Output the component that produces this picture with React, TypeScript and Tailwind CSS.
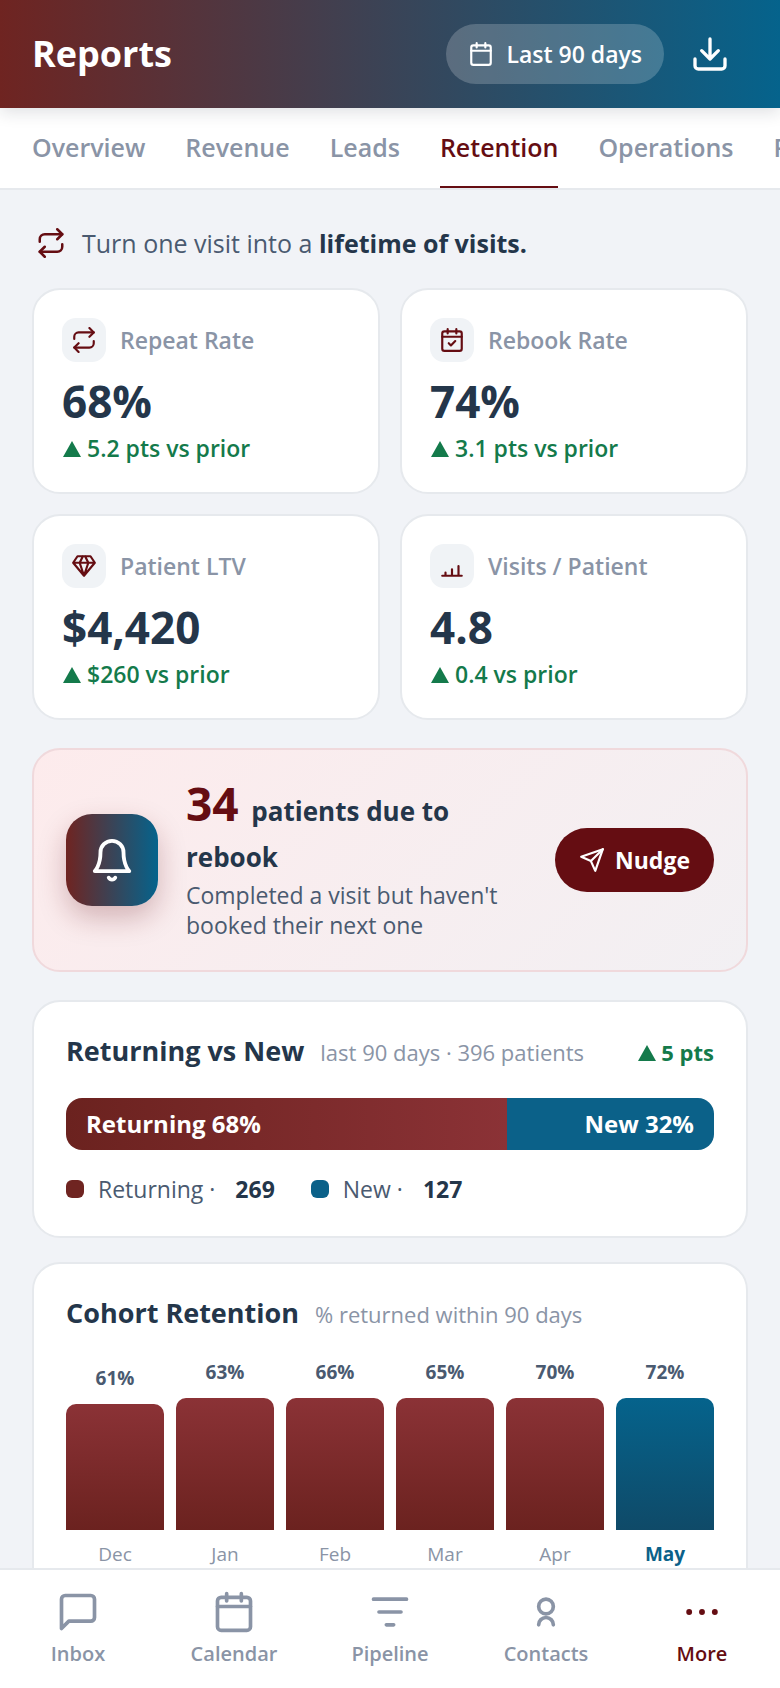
import type { ReactNode } from "react";

type IconProps = { className?: string; strokeWidth?: number; children: ReactNode };

function Icon({ className, strokeWidth = 2, children }: IconProps) {
  return (
    <svg
      viewBox="0 0 24 24"
      fill="none"
      stroke="currentColor"
      strokeWidth={strokeWidth}
      strokeLinecap="round"
      strokeLinejoin="round"
      aria-hidden="true"
      className={`shrink-0 ${className ?? ""}`}
    >
      {children}
    </svg>
  );
}

function UpArrow() {
  return (
    <svg viewBox="0 0 19 16" aria-label="up" className="inline h-4 w-[19px] align-baseline">
      <path d="M1 16 10 0l9 16z" fill="currentColor" />
    </svg>
  );
}

const repeatPath = (
  <>
    <path d="m17 1 4 4-4 4" />
    <path d="M3 11V9a4 4 0 0 1 4-4h14" />
    <path d="m7 23-4-4 4-4" />
    <path d="M21 13v2a4 4 0 0 1-4 4H3" />
  </>
);

const calendarPath = (
  <>
    <rect x="3" y="4" width="18" height="18" rx="2" />
    <path d="M8 2v4M16 2v4M3 9h18" />
  </>
);

const tabs = ["Overview", "Revenue", "Leads", "Retention", "Operations", "Providers"];

const stats = [
  { label: "Repeat Rate", value: "68%", delta: "5.2 pts vs prior", icon: repeatPath },
  {
    label: "Rebook Rate",
    value: "74%",
    delta: "3.1 pts vs prior",
    icon: (
      <>
        {calendarPath}
        <path d="m9 15 2 2 4-4" />
      </>
    ),
  },
  {
    label: "Patient LTV",
    value: "$4,420",
    delta: "$260 vs prior",
    icon: <path d="M6 3h12l4 6-10 12L2 9zM2 9h20M11 3 8 9l4 12 4-12-3-6" />,
  },
  {
    label: "Visits / Patient",
    value: "4.8",
    delta: "0.4 vs prior",
    icon: <path d="M3 21h18M6 21v-3M12 21v-6M18 21v-9" />,
  },
];

const cohorts = [
  { month: "Dec", rate: 61, height: 126 },
  { month: "Jan", rate: 63, height: 132 },
  { month: "Feb", rate: 66, height: 132 },
  { month: "Mar", rate: 65, height: 132 },
  { month: "Apr", rate: 70, height: 132 },
  { month: "May", rate: 72, height: 132, current: true },
];

const navItems = [
  {
    label: "Inbox",
    icon: <path d="M21 15a2 2 0 0 1-2 2H7l-4 4V5a2 2 0 0 1 2-2h14a2 2 0 0 1 2 2z" />,
  },
  { label: "Calendar", icon: calendarPath },
  { label: "Pipeline", icon: <path d="M3 5h18M6 12h12M10 19h4" /> },
  {
    label: "Contacts",
    icon: (
      <>
        <circle cx="12" cy="9" r="4" />
        <path d="M8 19a4 4 0 0 1 8 0" />
      </>
    ),
  },
  {
    label: "More",
    active: true,
    icon: (
      <g fill="currentColor" stroke="none">
        <circle cx="5" cy="12" r="1.6" />
        <circle cx="12" cy="12" r="1.6" />
        <circle cx="19" cy="12" r="1.6" />
      </g>
    ),
  },
];

function StatCard({ label, value, delta, icon }: (typeof stats)[number]) {
  return (
    <div className="rounded-[28px] border-2 border-[#e6e9ed] bg-white p-7">
      <div className="flex items-center gap-[14px]">
        <span className="flex size-11 items-center justify-center rounded-[14px] bg-[#f0f3f6] text-[#650d12]">
          <Icon className="size-[26px]">{icon}</Icon>
        </span>
        <span className="text-[23px] font-semibold text-[#8a94a6]">{label}</span>
      </div>
      <p className="mt-4 text-[44px] leading-[46px] font-bold text-[#24364a]">{value}</p>
      <p className="mt-2 text-[23px] leading-8 font-semibold text-[#147a4b]">
        <UpArrow /> {delta}
      </p>
    </div>
  );
}

function Panel({ title, note, extra, children }: { title: string; note: string; extra?: ReactNode; children: ReactNode }) {
  return (
    <section className="rounded-[28px] border-2 border-[#e6e9ed] bg-white px-8 py-[30px]">
      <div className="flex items-baseline gap-4">
        <h2 className="text-[27px] leading-[38px] font-bold text-[#24364a]">{title}</h2>
        <span className="text-[22px] text-[#8a94a6]">{note}</span>
        {extra}
      </div>
      {children}
    </section>
  );
}

export default function App() {
  return (
    <div className="flex h-screen flex-col overflow-hidden bg-[#f1f3f7] font-['Open_Sans',sans-serif]">
      <header className="z-10 flex shrink-0 items-center gap-2 bg-linear-to-r/srgb from-[#6f2421] to-[#05638c] px-8 py-6 text-white shadow-[0_4px_16px_rgba(20,30,50,0.14)]">
        <h1 className="flex-1 text-4xl font-bold">Reports</h1>
        <button className="flex h-[60px] items-center gap-3 rounded-full bg-white/20 px-[22px] text-[23px] font-semibold">
          <Icon className="size-[26px]">{calendarPath}</Icon>
          Last 90 days
        </button>
        <button aria-label="Download report" className="flex h-[60px] w-[76px] items-center justify-center">
          <Icon className="size-10">
            <path d="M21 15v4a2 2 0 0 1-2 2H5a2 2 0 0 1-2-2v-4" />
            <path d="m7 10 5 5 5-5M12 15V3" />
          </Icon>
        </button>
      </header>

      <nav className="flex h-[82px] shrink-0 gap-10 overflow-hidden border-b-2 border-[#e6e9ed] bg-white px-8">
        {tabs.map((tab) => (
          <a
            key={tab}
            href="#"
            className={
              tab === "Retention"
                ? "flex items-center border-b-2 border-[#650d12] pt-0.5 text-[25px] font-semibold whitespace-nowrap text-[#650d12]"
                : "flex items-center text-[25px] font-semibold whitespace-nowrap text-[#8a94a6]"
            }
          >
            {tab}
          </a>
        ))}
      </nav>

      <main className="min-h-0 flex-1 overflow-y-auto px-8 pt-9 [scrollbar-width:none]">
        <div className="flex items-center gap-4 pl-1">
          <Icon className="size-[30px] text-[#650d12]">{repeatPath}</Icon>
          <p className="text-[25px] leading-[34px] text-[#4a5a70]">
            Turn one visit into a <strong className="font-bold text-[#24364a]">lifetime of visits.</strong>
          </p>
        </div>

        <div className="mt-7 grid grid-cols-2 gap-5">
          {stats.map((stat) => (
            <StatCard key={stat.label} {...stat} />
          ))}
        </div>

        <section className="mt-7 flex items-center gap-7 rounded-[28px] border-2 border-[#f0d9dc] bg-linear-135/srgb from-[#fdebec] to-[#f2f0f3] px-8 py-[30px]">
          <span className="flex size-[92px] shrink-0 items-center justify-center rounded-[26px] bg-linear-to-r/srgb from-[#6f2421] to-[#05638c] text-white shadow-[0_12px_28px_rgba(101,13,18,0.25)]">
            <Icon className="size-[46px]">
              <path d="M6 8a6 6 0 0 1 12 0c0 7 3 9.8 3 9.8H3S6 15 6 8z" />
              <path d="M10.3 21.2a1.94 1.94 0 0 0 3.4 0" />
            </Icon>
          </span>
          <div className="flex-1">
            <p className="text-[26px] leading-[46px] font-bold text-[#24364a]">
              <span className="mr-1.5 text-[46px] text-[#650d12]">34</span> patients due to rebook
            </p>
            <p className="text-[23px] leading-[30px] text-[#4a5a70]">
              Completed a visit but haven't booked their next one
            </p>
          </div>
          <button className="flex h-16 items-center gap-[10px] rounded-full bg-[#650d12] px-6 text-[23px] font-bold text-white">
            <Icon className="size-[26px]">
              <path d="M22 2 11 13" />
              <path d="m22 2-7 20-4-9-9-4z" />
            </Icon>
            Nudge
          </button>
        </section>

        <div className="mt-7 flex flex-col gap-6 pb-8">
          <Panel
            title="Returning vs New"
            note="last 90 days · 396 patients"
            extra={
              <span className="ml-auto text-[22px] font-bold text-[#147a4b]">
                <UpArrow /> 5 pts
              </span>
            }
          >
            <div className="mt-7 flex h-[52px] overflow-hidden rounded-2xl text-2xl font-bold text-white">
              <div className="flex w-[68%] items-center bg-linear-to-r/srgb from-[#6b221f] to-[#8b3236] px-5">
                Returning 68%
              </div>
              <div className="flex flex-1 items-center justify-end bg-[#0b6189] px-5">New 32%</div>
            </div>
            <div className="mt-[22px] flex gap-9 text-[23px] leading-[34px] text-[#4a5a70]">
              <span className="flex items-center gap-[14px]">
                <i className="size-[18px] rounded-md bg-[#6f2421]" />
                Returning · <b className="ml-1.5 text-[#24364a]">269</b>
              </span>
              <span className="flex items-center gap-[14px]">
                <i className="size-[18px] rounded-md bg-[#0b6189]" />
                New · <b className="ml-1.5 text-[#24364a]">127</b>
              </span>
            </div>
          </Panel>

          <Panel title="Cohort Retention" note="% returned within 90 days">
            <div className="mt-[26px] flex items-end gap-3 text-[19px] leading-7">
              {cohorts.map((c) => (
                <div key={c.month} className="flex flex-1 flex-col text-center">
                  <span className="font-bold text-[#4a5a70]">{c.rate}%</span>
                  <div
                    className={
                      c.current
                        ? "mt-3 rounded-t-[10px] bg-linear-to-b/srgb from-[#05638c] to-[#0f4a68]"
                        : "mt-3 rounded-t-[10px] bg-linear-to-b/srgb from-[#8b3236] to-[#6b221f]"
                    }
                    style={{ height: c.height }}
                  />
                  <span className={c.current ? "mt-[10px] font-bold text-[#0b6189]" : "mt-[10px] text-[#8a94a6]"}>
                    {c.month}
                  </span>
                </div>
              ))}
            </div>
          </Panel>
        </div>
      </main>

      <nav className="grid h-[120px] shrink-0 grid-cols-5 border-t-2 border-[#e6e9ed] bg-white pt-5">
        {navItems.map((item) => (
          <a
            key={item.label}
            href="#"
            className={
              item.active
                ? "flex flex-col items-center gap-[6px] text-xl leading-7 font-semibold text-[#650d12]"
                : "flex flex-col items-center gap-[6px] text-xl leading-7 font-semibold text-[#8a94a6]"
            }
          >
            <Icon className="size-11">{item.icon}</Icon>
            {item.label}
          </a>
        ))}
      </nav>
    </div>
  );
}
